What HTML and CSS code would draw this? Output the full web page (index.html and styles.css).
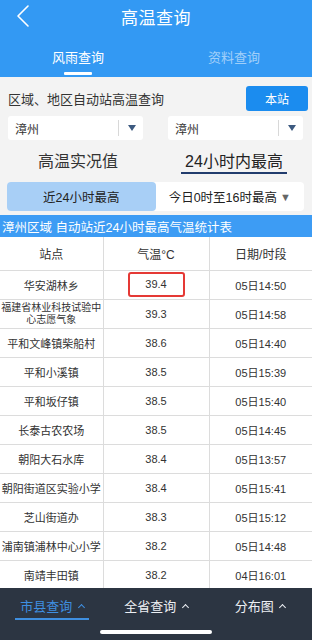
FILE: index.html
```html
<!DOCTYPE html>
<html lang="zh">
<head>
<meta charset="utf-8">
<link rel="stylesheet" href="styles.css">
</head>
<body>
<div class="page">
  <header class="header">
    <div class="topbar">
      <svg class="back" width="14" height="24" viewBox="0 0 14 24"><path d="M12 2 L2 12 L12 22" fill="none" stroke="#fff" stroke-width="1.6" stroke-linecap="round" stroke-linejoin="round"/></svg>
      <div class="title">高温查询</div>
    </div>
    <div class="tabs">
      <div class="tab active"><span>风雨查询</span></div>
      <div class="tab dim"><span>资料查询</span></div>
    </div>
  </header>

  <section class="filters">
    <div class="filter-row">
      <div class="label">区域、地区自动站高温查询</div>
      <div class="btn">本站</div>
    </div>
    <div class="select-row">
      <div class="select"><span class="sel-text">漳州</span><span class="sel-sep"></span><span class="sel-arrow"></span></div>
      <div class="select"><span class="sel-text">漳州</span><span class="sel-sep"></span><span class="sel-arrow"></span></div>
    </div>
  </section>

  <section class="modes">
    <div class="mode">高温实况值</div>
    <div class="mode active"><span>24小时内最高</span></div>
  </section>

  <section class="segment">
    <div class="seg on">近24小时最高</div>
    <div class="seg">今日0时至16时最高 <span class="tri">▼</span></div>
  </section>

  <div class="table-title">漳州区域 自动站近24小时最高气温统计表</div>

  <div class="table-wrap">
    <table class="grid">
      <thead>
        <tr><th>站点</th><th>气温°C</th><th>日期/时段</th></tr>
      </thead>
      <tbody>
        <tr><td>华安湖林乡</td><td><span class="hl">39.4</span></td><td>05日14:50</td></tr>
        <tr><td class="two">福建省林业科技试验中<br>心志愿气象</td><td>39.3</td><td>05日14:58</td></tr>
        <tr><td>平和文峰镇柴船村</td><td>38.6</td><td>05日14:40</td></tr>
        <tr><td>平和小溪镇</td><td>38.5</td><td>05日15:39</td></tr>
        <tr><td>平和坂仔镇</td><td>38.5</td><td>05日15:40</td></tr>
        <tr><td>长泰古农农场</td><td>38.5</td><td>05日14:45</td></tr>
        <tr><td>朝阳大石水库</td><td>38.4</td><td>05日13:57</td></tr>
        <tr><td>朝阳街道区实验小学</td><td>38.4</td><td>05日15:41</td></tr>
        <tr><td>芝山街道办</td><td>38.3</td><td>05日15:12</td></tr>
        <tr><td>浦南镇浦林中心小学</td><td>38.2</td><td>05日14:48</td></tr>
        <tr><td>南靖丰田镇</td><td>38.2</td><td>04日16:01</td></tr>
      </tbody>
    </table>
  </div>

  <nav class="bottombar">
    <div class="btabs">
      <div class="btab active"><span>市县查询 <i class="caret"></i></span></div>
      <div class="btab"><span>全省查询 <i class="caret"></i></span></div>
      <div class="btab"><span>分布图 <i class="caret"></i></span></div>
    </div>
    <div class="home"></div>
  </nav>
</div>
</body>
</html>
```

FILE: styles.css
```css
* { box-sizing: border-box; }
html, body { margin: 0; padding: 0; }
body {
  font-family: "Liberation Sans", "Noto Sans CJK SC", sans-serif;
  background: #f3f3f3;
  color: #333;
}
.page {
  width: 312px;
  height: 640px;
  overflow: hidden;
  display: flex;
  flex-direction: column;
}
.header {
  background: #3399f3;
  height: 77px;
  color: #fff;
  flex: none;
}
.topbar {
  height: 32px;
  display: flex;
  align-items: center;
  justify-content: center;
  position: relative;
}
.back {
  position: absolute;
  left: 16px;
  top: 4px;
}
.title {
  font-size: 17px;
  letter-spacing: 0.5px;
}
.tabs {
  display: flex;
  height: 45px;
}
.tab {
  flex: 1;
  display: flex;
  justify-content: center;
  font-size: 13px;
  padding-top: 15px;
}
.tab span { height: 28px; }
.tab.active span {
  position: relative;
  padding: 0 1px;
}
.tab.active span::after {
  content: "";
  position: absolute;
  left: 50%;
  margin-left: -14px;
  width: 28px;
  bottom: 0;
  height: 3px;
  background: #fff;
  border-radius: 1px;
}
.tab.dim { color: rgba(255,255,255,0.55); }

.filters {
  flex: none;
  padding: 9px 4px 0 8px;
}
.filter-row {
  display: flex;
  justify-content: space-between;
  align-items: center;
  height: 25px;
}
.label { font-size: 13px; color: #333; }
.btn {
  width: 62px;
  height: 25px;
  background: #1b8cef;
  color: #fff;
  font-size: 12px;
  display: flex;
  align-items: center;
  justify-content: center;
  border-radius: 3px;
}
.select-row {
  display: flex;
  justify-content: space-between;
  padding: 5px 5px 0 0;
}
.select {
  width: 135px;
  height: 24px;
  background: #fff;
  border-radius: 3px;
  display: flex;
  align-items: center;
  padding-left: 7px;
  font-size: 12px;
  color: #333;
}
.sel-text { flex: 1; }
.sel-sep {
  width: 1px;
  height: 16px;
  background: #d8d8d8;
}
.sel-arrow {
  width: 0; height: 0;
  border-left: 4px solid transparent;
  border-right: 4px solid transparent;
  border-top: 6px solid #3d5a80;
  margin: 0 7px 0 9px;
}

.modes {
  flex: none;
  display: flex;
  height: 42px;
  padding-top: 8px;
}
.mode {
  flex: 1;
  display: flex;
  justify-content: center;
  font-size: 16px;
  color: #333;
}
.mode.active span {
  padding: 0 4px;
  height: 26px;
  border-bottom: 2px solid #213c6d;
  color: #222;
}
.segment {
  flex: none;
  display: flex;
  margin: 0 8px 0 7px;
  height: 29px;
  background: #fff;
  border-radius: 4px;
}
.seg {
  flex: 1;
  display: flex;
  align-items: center;
  justify-content: center;
  font-size: 12.5px;
  color: #222;
}
.seg.on {
  background: #a8cff6;
  border-radius: 4px;
}
.tri { font-size: 11px; color: #666; margin-left: 3px; }

.table-title {
  flex: none;
  margin-top: 4px;
  height: 22px;
  background: #3d9cf4;
  color: #fff;
  font-size: 12.5px;
  padding-left: 2px;
  display: flex;
  align-items: center;
  white-space: nowrap;
}
.table-wrap {
  flex: 1;
  overflow: hidden;
  background: #fff;
}
.grid {
  width: 312px;
  border-collapse: collapse;
  table-layout: fixed;
}
.grid th, .grid td {
  border-bottom: 1px solid #dcdcdc;
  border-left: 1px solid #dcdcdc;
  text-align: center;
  font-weight: normal;
  font-size: 11px;
  color: #333;
  padding: 0;
  height: 29px;
  white-space: nowrap;
}
.grid th:first-child, .grid td:first-child { border-left: none; width: 103px; }
.grid th:nth-child(2), .grid td:nth-child(2) { width: 106px; }
.grid th { height: 33px; font-size: 12px; }
.grid td.two { font-size: 10px; line-height: 12px; }
.hl {
  display: inline-block;
  width: 57px;
  height: 25px;
  line-height: 21px;
  border: 2px solid #e53935;
  border-radius: 3px;
}

.bottombar {
  flex: none;
  height: 52px;
  background: #2c3542;
  display: flex;
  flex-direction: column;
  align-items: center;
}
.btabs {
  display: flex;
  width: 100%;
  height: 42px;
  padding-top: 8px;
}
.btab {
  flex: 1;
  display: flex;
  justify-content: center;
  font-size: 13px;
  color: #eceff3;
}
.btab span { height: 24px; padding: 0 1px; }
.btab.active { color: #3f8fe0; }
.btab.active span {
  border-bottom: 2px solid #3f8fe0;
  padding: 0 5px;
}
.caret {
  display: inline-block;
  width: 5px;
  height: 5px;
  border-left: 1.5px solid currentColor;
  border-top: 1.5px solid currentColor;
  transform: rotate(45deg);
  margin-left: 3px;
  vertical-align: 1px;
}
.home {
  width: 112px;
  height: 4px;
  background: #fff;
  border-radius: 2px;
}
```
